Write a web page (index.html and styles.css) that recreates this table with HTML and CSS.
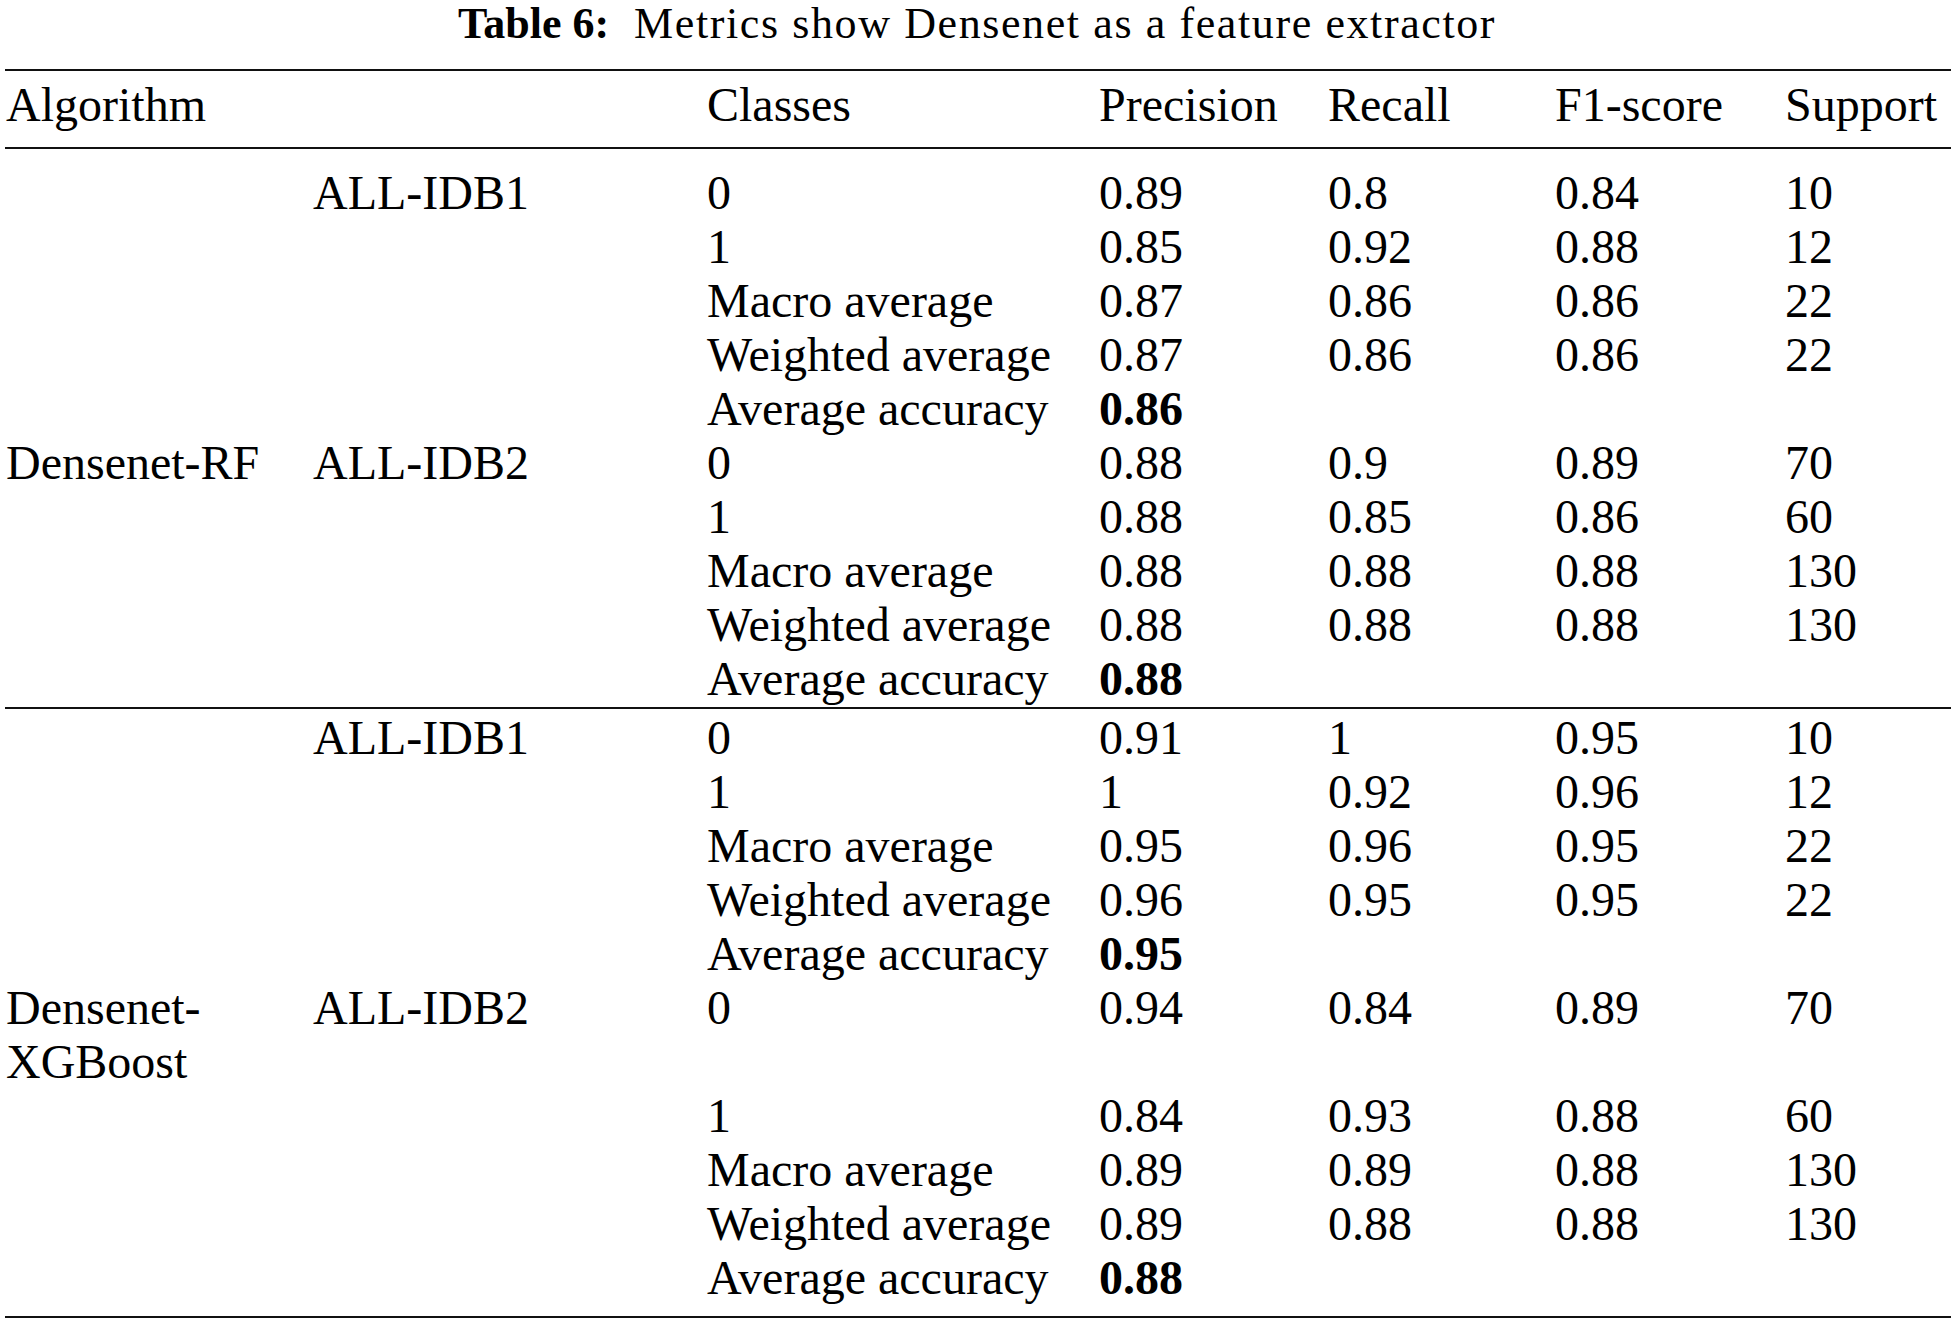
FILE: index.html
```html
<!DOCTYPE html>
<html lang="en">
<head>
<meta charset="utf-8">
<title>Table 6: Metrics show Densenet as a feature extractor</title>
<link rel="stylesheet" href="styles.css">
</head>
<body>
<div class="caption"><b class="caption-label">Table 6:</b><span class="caption-text">Metrics show Densenet as a feature extractor</span></div>
<table class="metrics">
  <colgroup>
    <col class="c-alg"><col class="c-ds"><col class="c-cls"><col class="c-prec"><col class="c-rec"><col class="c-f1"><col class="c-sup">
  </colgroup>
  <thead>
    <tr><th class="first" colspan="2">Algorithm</th><th>Classes</th><th>Precision</th><th>Recall</th><th>F1-score</th><th>Support</th></tr>
  </thead>
  <tbody class="group group-a">
    <tr><td class="first"></td><td>ALL-IDB1</td><td>0</td><td>0.89</td><td>0.8</td><td>0.84</td><td>10</td></tr>
    <tr><td class="first"></td><td></td><td>1</td><td>0.85</td><td>0.92</td><td>0.88</td><td>12</td></tr>
    <tr><td class="first"></td><td></td><td>Macro average</td><td>0.87</td><td>0.86</td><td>0.86</td><td>22</td></tr>
    <tr><td class="first"></td><td></td><td>Weighted average</td><td>0.87</td><td>0.86</td><td>0.86</td><td>22</td></tr>
    <tr><td class="first"></td><td></td><td>Average accuracy</td><td><b>0.86</b></td><td></td><td></td><td></td></tr>
    <tr><td class="first">Densenet-RF</td><td>ALL-IDB2</td><td>0</td><td>0.88</td><td>0.9</td><td>0.89</td><td>70</td></tr>
    <tr><td class="first"></td><td></td><td>1</td><td>0.88</td><td>0.85</td><td>0.86</td><td>60</td></tr>
    <tr><td class="first"></td><td></td><td>Macro average</td><td>0.88</td><td>0.88</td><td>0.88</td><td>130</td></tr>
    <tr><td class="first"></td><td></td><td>Weighted average</td><td>0.88</td><td>0.88</td><td>0.88</td><td>130</td></tr>
    <tr><td class="first"></td><td></td><td>Average accuracy</td><td><b>0.88</b></td><td></td><td></td><td></td></tr>
  </tbody>
  <tbody class="group group-b">
    <tr><td class="first"></td><td>ALL-IDB1</td><td>0</td><td>0.91</td><td>1</td><td>0.95</td><td>10</td></tr>
    <tr><td class="first"></td><td></td><td>1</td><td>1</td><td>0.92</td><td>0.96</td><td>12</td></tr>
    <tr><td class="first"></td><td></td><td>Macro average</td><td>0.95</td><td>0.96</td><td>0.95</td><td>22</td></tr>
    <tr><td class="first"></td><td></td><td>Weighted average</td><td>0.96</td><td>0.95</td><td>0.95</td><td>22</td></tr>
    <tr><td class="first"></td><td></td><td>Average accuracy</td><td><b>0.95</b></td><td></td><td></td><td></td></tr>
    <tr><td class="first">Densenet-XGBoost</td><td>ALL-IDB2</td><td>0</td><td>0.94</td><td>0.84</td><td>0.89</td><td>70</td></tr>
    <tr><td class="first"></td><td></td><td>1</td><td>0.84</td><td>0.93</td><td>0.88</td><td>60</td></tr>
    <tr><td class="first"></td><td></td><td>Macro average</td><td>0.89</td><td>0.89</td><td>0.88</td><td>130</td></tr>
    <tr><td class="first"></td><td></td><td>Weighted average</td><td>0.89</td><td>0.88</td><td>0.88</td><td>130</td></tr>
    <tr><td class="first"></td><td></td><td>Average accuracy</td><td><b>0.88</b></td><td></td><td></td><td></td></tr>
  </tbody>
</table>
</body>
</html>
```

FILE: styles.css
```css
html, body {
  margin: 0;
  padding: 0;
  background: #ffffff;
  overflow: hidden;
}

body {
  font-family: "Liberation Serif", "Times New Roman", serif;
  color: #000000;
}

.caption {
  margin: 0 0 21px;
  height: 48px;
  font-size: 44px;
  line-height: 48px;
  text-align: center;
  white-space: nowrap;
}

.caption-label {
  font-weight: bold;
  margin-right: 25px;
}

.caption-text {
  letter-spacing: 1.6px;
}

.metrics {
  margin-left: 5px;
  width: 1946px;
  border-collapse: separate;
  border-spacing: 0;
  table-layout: fixed;
  font-size: 48px;
  line-height: 54px;
}

.c-alg { width: 308px; }
.c-ds { width: 394px; }
.c-cls { width: 392px; }
.c-prec { width: 229px; }
.c-rec { width: 227px; }
.c-f1 { width: 230px; }

.metrics th,
.metrics td {
  padding: 0;
  text-align: left;
  vertical-align: top;
  font-weight: normal;
  white-space: nowrap;
}

.metrics .first {
  padding-left: 1px;
  white-space: normal;
}

.metrics td b {
  font-weight: bold;
}

.metrics thead th {
  border-top: 2px solid #111111;
  border-bottom: 2px solid #111111;
  padding-top: 7px;
  padding-bottom: 15px;
}

.group tr:last-child td {
  border-bottom: 2px solid #111111;
}

.group-a tr:first-child td { padding-top: 17px; }
.group-a tr:last-child td { padding-bottom: 1px; }

.group-b tr:first-child td { padding-top: 2px; }
.group-b tr:last-child td { padding-bottom: 11px; }
```
